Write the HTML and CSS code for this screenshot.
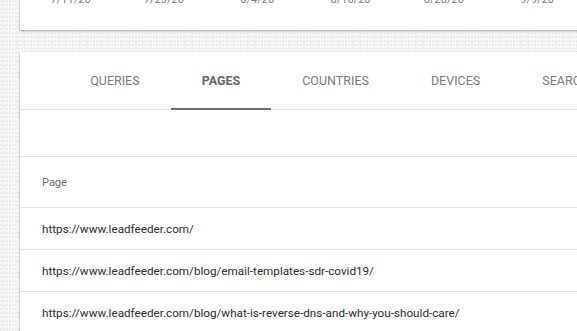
FILE: index.html
```html
<!DOCTYPE html>
<html>
<head>
<meta charset="utf-8">
<link rel="stylesheet" href="styles.css">
</head>
<body>
<div class="page">
  <section class="card chart-card">
    <div class="axis">
      <span>7/11/20</span><span>7/23/20</span><span>8/4/20</span><span>8/16/20</span><span>8/28/20</span><span>9/9/20</span>
    </div>
  </section>
  <section class="card table-card">
    <nav class="tabs">
      <div class="tab">QUERIES</div>
      <div class="tab active">PAGES</div>
      <div class="tab">COUNTRIES</div>
      <div class="tab">DEVICES</div>
      <div class="tab">SEARCH APPEARANCE</div>
      <div class="tab">DATES</div>
    </nav>
    <div class="toolbar"></div>
    <div class="row header-row">Page</div>
    <div class="row">https://www.leadfeeder.com/</div>
    <div class="row">https://www.leadfeeder.com/blog/email-templates-sdr-covid19/</div>
    <div class="row">https://www.leadfeeder.com/blog/what-is-reverse-dns-and-why-you-should-care/</div>
  </section>
</div>
</body>
</html>
```
FILE: styles.css
```css
html, body {
  margin: 0;
  padding: 0;
  height: 100%;
  overflow: hidden;
}
body {
  font-family: Roboto, "Noto Sans", Arial, sans-serif;
  background-color: #f8f8f8;
  background-image:
    radial-gradient(circle at 1px 1px, #dedede 0.6px, transparent 0.8px),
    radial-gradient(circle at 3px 2px, #e2e2e2 0.6px, transparent 0.8px);
  background-size: 3px 4px, 7px 5px;
}
.page {
  padding-left: 20px;
  width: 800px;
  display: flex;
  flex-direction: column;
  gap: 22px;
}
.card {
  background: #fff;
  box-shadow: 0 1px 2px rgba(0,0,0,0.35), 0 0 1px rgba(0,0,0,0.15);
}
.chart-card {
  margin-top: -6px;
  padding-bottom: 24px;
}
.axis {
  display: flex;
  padding-left: 4px;
  height: 12px;
  line-height: 12px;
  font-size: 11px;
  color: #7a7a7a;
}
.axis span {
  width: 93.3px;
  text-align: center;
  flex: none;
}
.tabs {
  display: flex;
  padding-left: 39.2px;
  height: 58px;
  border-bottom: 1px solid #e2e2e2;
  box-sizing: border-box;
}
.tab {
  padding: 0 31px;
  display: flex;
  align-items: center;
  font-size: 12.5px;
  color: #7a7a7a;
  white-space: nowrap;
  position: relative;
}
.tab.active {
  font-weight: 700;
  color: #666;
}
.tab.active::after {
  content: "";
  position: absolute;
  left: 0;
  right: 0;
  bottom: -1px;
  height: 2px;
  background: #6b6b6b;
}
.toolbar {
  height: 46px;
  border-bottom: 1px solid #e2e2e2;
}
.row {
  height: 41px;
  border-bottom: 1px solid #e2e2e2;
  display: flex;
  align-items: center;
  padding-left: 22px;
  font-size: 11.7px;
  color: #2a2a2a;
  white-space: nowrap;
}
.header-row {
  height: 50px;
  font-size: 11px;
  color: #666;
}
```
